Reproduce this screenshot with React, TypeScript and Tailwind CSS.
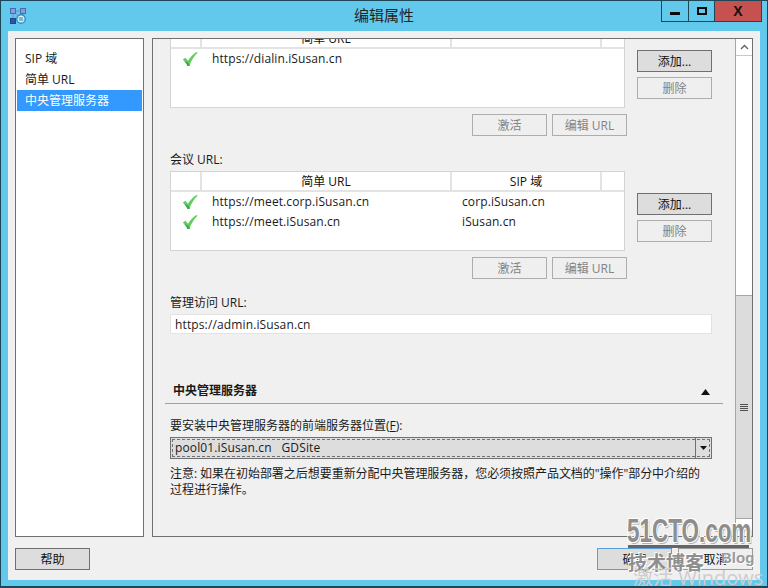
import React from "react";

const CheckIcon = () => (
  <svg width="16" height="16" viewBox="0 0 16 16" className="shrink-0">
    <path d="M0.8 8.6 L3.4 6.8 L6 9.8 C8 6.4 10.8 3.2 14.6 1 L15.6 1.8 C11.8 5.4 9.2 9.6 7.4 15 L5.6 15 C4.2 12.4 2.8 10.4 0.8 8.6 Z" fill="#62cc5e" />
    <path d="M5.6 15 C4.6 13 3.6 11.4 2.4 10 L5.8 11.4 L7.8 14 L7.4 15 Z" fill="#35a84a" />
  </svg>
);

const AppIcon = () => (
  <svg width="16" height="16" viewBox="0 0 16 16">
    <path d="M3 3 L12 12 M13 3 L13 8 M3 3 L3 13 M3 3 H13" stroke="#6f8fd0" strokeWidth="1" fill="none" />
    <rect x="0.5" y="0.5" width="5" height="5" fill="#7f9fe0" stroke="#4a6ab0" />
    <rect x="10.5" y="0.5" width="5" height="5" fill="#7f9fe0" stroke="#4a6ab0" />
    <rect x="0.5" y="10.5" width="5" height="5" fill="#2f55a8" stroke="#24468c" />
    <circle cx="11" cy="11" r="4.2" fill="#dff3fa" stroke="#2f8fc0" strokeWidth="1.4" />
    <path d="M8.6 10 H13 M13.4 12 H9" stroke="#1f78b0" strokeWidth="1" />
  </svg>
);

const Btn = ({ label, disabled, className = "" }: { label: string; disabled?: boolean; className?: string }) => (
  <div
    className={`w-[75px] h-[22px] pt-[2px] flex items-center justify-center border shrink-0 ${
      disabled ? "bg-[#efefef] border-[#adadad] text-[#838383]" : "bg-[#dddddd] border-[#707070] text-[#111]"
    } ${className}`}
  >
    {label}
  </div>
);

const UrlTable = ({ rows }: { rows: { url: string; sip: string }[] }) => (
  <div className="flex gap-3">
    <div className="w-[455px] shrink-0">
      <div className="h-[80px] bg-white border border-[#d4d4d4]">
        <div className="flex h-[20px] border-b-2 border-[#e3e3e3] leading-[19px] text-[#111]">
          <div className="w-[31px] border-r-2 border-[#e3e3e3]" />
          <div className="w-[250px] border-r-2 border-[#e3e3e3] text-center">简单 URL</div>
          <div className="w-[150px] border-r-2 border-[#e3e3e3] text-center">{rows[0].sip ? "SIP 域" : ""}</div>
          <div className="flex-1" />
        </div>
        {rows.map((r) => (
          <div key={r.url} className="flex items-center h-[20px] text-[#1a1a1a] tracking-[0.11px]">
            <div className="w-[41px] pl-[11px]">
              <CheckIcon />
            </div>
            <div className="w-[250px]">{r.url}</div>
            <div>{r.sip}</div>
          </div>
        ))}
      </div>
      <div className="flex justify-end gap-[5px] mt-[6px] -mr-[2px]">
        <Btn label="激活" disabled />
        <Btn label="编辑 URL" disabled />
      </div>
    </div>
    <div className="flex flex-col gap-[5px] pt-[22px]">
      <Btn label="添加..." />
      <Btn label="删除" disabled />
    </div>
  </div>
);

const Scrollbar = () => (
  <div className="w-[17px] shrink-0 bg-white border-l border-[#a6a6a6] flex flex-col">
    <div className="h-[17px] border-b border-[#c8c8c8] flex items-center justify-center">
      <svg width="9" height="6" viewBox="0 0 9 6">
        <path d="M1 5 L4.5 1.5 L8 5" fill="none" stroke="#606060" strokeWidth="1.3" />
      </svg>
    </div>
    <div className="h-[239px]" />
    <div className="h-[224px] bg-[#dcdcdc] border-y border-[#a6a6a6] flex flex-col items-center justify-center gap-[1px]">
      <div className="w-[8px] h-px bg-[#505050]" />
      <div className="w-[8px] h-px bg-[#505050]" />
      <div className="w-[8px] h-px bg-[#505050]" />
      <div className="w-[8px] h-px bg-[#505050]" />
    </div>
  </div>
);

// 51CTO watermark stamped over the bottom right corner
const Watermark = () => (
  <div className="absolute left-[620px] top-[510px] w-[148px] h-[78px] overflow-hidden pointer-events-none">
    <div className="absolute left-[6px] top-[2px] text-[33px] leading-[36px] font-bold whitespace-nowrap text-[#8e8e8e] origin-left scale-x-[0.68] [font-family:'Liberation_Sans',sans-serif] [text-shadow:1px_1px_0_#fff,-1px_-1px_0_#fff,1px_-1px_0_#fff,-1px_1px_0_#fff,2px_2px_0_#b0b0b0]">
      51CTO.com
    </div>
    <div className="absolute left-[7px] top-[34px] w-[121px] h-[3px] bg-[#666]" />
    <div className="absolute left-[7px] top-[39px] text-[19px] leading-[24px] font-bold whitespace-nowrap text-[#8e8e8e] [font-family:'Noto_Sans_CJK_SC',sans-serif] [text-shadow:1px_1px_0_#fff,-1px_-1px_0_#fff]">
      技术博客
    </div>
    <div className="absolute left-[100px] top-[37px] text-[15px] leading-[20px] font-bold text-[#9a9a9a] [font-family:'Liberation_Sans',sans-serif] [text-shadow:1px_1px_0_#fff]">
      Blog
    </div>
    <div className="absolute left-[12px] top-[57px] text-[20px] leading-[20px] whitespace-nowrap text-[#cdcdcd] [font-family:'Open_Sans','Noto_Sans_CJK_SC',sans-serif]">
      激活 Windows
    </div>
  </div>
);

export default function App() {
  return (
    <div className="relative w-[768px] h-[588px] overflow-hidden bg-[#63c9ec] border border-[#1d4656] border-b-2 text-[12px] leading-[16px] text-[#1a1a1a] [font-family:'Open_Sans','Noto_Sans_CJK_SC',sans-serif]">
      {/* title bar */}
      <div className="relative h-[30px] flex items-center pl-[9px]">
        <AppIcon />
        <div className="absolute inset-x-0 top-[5px] text-center text-[15px] leading-[18px] text-[#222]">编辑属性</div>
        <div className="absolute right-[5px] top-0 flex h-[21px] border border-t-0 border-[#1d4656]">
          <div className="w-[27px] border-r border-[#1d4656] flex items-center justify-center">
            <div className="w-[10px] h-[3px] bg-[#0a0a0a] mt-[4px]" />
          </div>
          <div className="w-[26px] border-r border-[#1d4656] flex items-center justify-center">
            <div className="w-[10px] h-[8px] border-2 border-[#0a0a0a]" />
          </div>
          <div className="w-[46px] bg-[#c75050] flex items-center justify-center text-[14px] font-bold text-[#111] [font-family:'Liberation_Sans',sans-serif]">
            X
          </div>
        </div>
      </div>

      {/* client area */}
      <div className="mx-[7px] h-[549px] bg-[#f0f0f0] px-[7px] pt-[7px] flex flex-col">
        <div className="flex gap-[8px] h-[499px]">
          <div className="w-[129px] bg-white border border-[#707070] pt-[10px] px-px">
            <div className="h-[20px] leading-[20px] pl-[8px]">SIP 域</div>
            <div className="h-[21px] leading-[21px] pl-[8px]">简单 URL</div>
            <div className="h-[21px] leading-[21px] pl-[8px] bg-[#3399ff] text-white">中央管理服务器</div>
          </div>
          <div className="w-[601px] flex border border-[#707070] bg-[#f0f0f0]">
            <div className="flex-1 overflow-hidden">
              <div className="-mt-[11px] pl-[17px]">
                <UrlTable rows={[{ url: "https://dialin.iSusan.cn", sip: "" }]} />
                <div className="mt-[17px] mb-[4px] h-[14px] leading-[14px]">会议 URL:</div>
                <UrlTable
                  rows={[
                    { url: "https://meet.corp.iSusan.cn", sip: "corp.iSusan.cn" },
                    { url: "https://meet.iSusan.cn", sip: "iSusan.cn" },
                  ]}
                />
                <div className="mt-[17px] mb-[4px] h-[14px] leading-[14px]">管理访问 URL:</div>
                <div className="w-[542px] h-[20px] bg-white border border-[#e3e3e3] pl-[4px] leading-[19px] tracking-[0.13px]">
                  https://admin.iSusan.cn
                </div>
                <div className="-ml-[5px] w-[558px] mt-[47px] h-[23px] border-b border-[#a0a0a0] pl-[8px] flex items-start justify-between pr-[13px] pt-[2px]">
                  <span className="font-bold">中央管理服务器</span>
                  <svg width="9" height="6" viewBox="0 0 9 6" className="mt-[6px]">
                    <path d="M0 6 L4.5 0 L9 6 Z" fill="#111" />
                  </svg>
                </div>
                <div className="mt-[15px] mb-[4px] h-[14px] leading-[14px]">要安装中央管理服务器的前端服务器位置(<span className="underline">F</span>):</div>
                <div className="relative w-[542px] h-[22px] bg-[#dddddd] border border-[#707070] flex items-center pl-[4px]">
                  <span className="whitespace-pre tracking-[0.13px]">pool01.iSusan.cn   GDSite</span>
                  <div className="absolute inset-px border border-dashed border-[#707070]" />
                  <div className="absolute right-0 inset-y-0 w-[16px] border-l border-[#707070] flex items-center justify-center">
                    <svg width="7" height="4" viewBox="0 0 7 4">
                      <path d="M0 0 H7 L3.5 4 Z" fill="#111" />
                    </svg>
                  </div>
                </div>
                <div className="mt-[7px] w-[545px] leading-[16px] tracking-[-0.04px]">
                  注意: 如果在初始部署之后想要重新分配中央管理服务器，您必须按照产品文档的"操作"部分中介绍的
                  <br />
                  过程进行操作。
                </div>
              </div>
            </div>
            <Scrollbar />
          </div>
        </div>
        <div className="flex mt-[11px]">
          <Btn label="帮助" />
          <div className="flex-1" />
          <Btn label="确定" className="!border-[#5a9fdc]" />
          <Btn label="取消" disabled className="ml-[6px] !text-[#111] !border-[#9a9a9a]" />
        </div>
      </div>
      <Watermark />
    </div>
  );
}
